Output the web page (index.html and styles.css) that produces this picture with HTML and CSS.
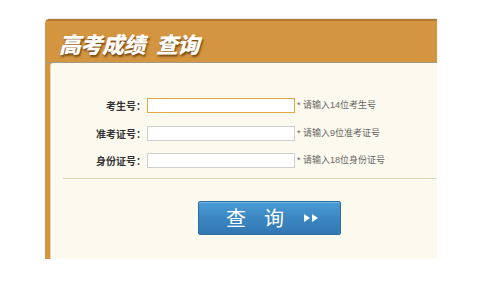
FILE: index.html
```html
<!DOCTYPE html>
<html lang="zh-CN">
<head>
    <meta charset="UTF-8">
    <meta name="viewport" content="width=device-width, initial-scale=1.0">
    <title>高考成绩查询</title>
    <link rel="stylesheet" href="styles.css">
</head>
<body>
    <div class="panel">
        <div class="panel-head">
            <h1><span>高考成绩</span><span class="title-gap">查询</span></h1>
        </div>
        <div class="panel-body">
            <form class="query-form" onsubmit="return false;">
                <label for="ksh">考生号：</label>
                <input type="text" id="ksh" class="focused">
                <span class="hint">* 请输入14位考生号</span>

                <label for="zkzh">准考证号：</label>
                <input type="text" id="zkzh">
                <span class="hint">* 请输入9位准考证号</span>

                <label for="sfzh">身份证号：</label>
                <input type="text" id="sfzh">
                <span class="hint">* 请输入18位身份证号</span>
            </form>
            <div class="divider"></div>
            <div class="actions">
                <button type="button" class="query-btn">
                    <span>查</span><span class="btn-gap">询</span>
                    <svg class="arrows" width="16" height="8" viewBox="0 0 16 8">
                        <polygon points="1,0 7,4 1,8" fill="#fff"/>
                        <polygon points="9,0 15,4 9,8" fill="#fff"/>
                    </svg>
                </button>
            </div>
        </div>
    </div>
</body>
</html>
```

FILE: styles.css
```css
body {
    margin: 0;
    background: #fff;
    font-family: "Liberation Sans", "Noto Sans CJK SC", sans-serif;
}
.panel {
    width: 392px;
    margin: 18px 0 0 45px;
    background-color: #d3953f;
    border-top: 1px solid #efe6dc;
    border-radius: 5px 0 0 0;
    overflow: hidden;
}
.panel-head {
    height: 41px;
    border-top: 2px solid #b37a35;
    border-bottom: 1px solid #a39a85;
    display: flex;
    align-items: center;
    padding-left: 14px;
}
.panel-head h1 {
    margin: 2px 0 0 0;
    font-size: 22px;
    font-weight: 900;
    font-style: italic;
    color: #fff;
    text-shadow: 1px 2px 2px rgba(80, 40, 0, 0.7);
    font-family: "Noto Sans CJK SC", sans-serif;
    letter-spacing: -0.5px;
}
.title-gap {
    margin-left: 11px;
}
.panel-body {
    margin-left: 5px;
    height: 196px;
    background-color: #fcf9ee;
    border-left: 1px solid #e6d9b8;
    border-radius: 3px 0 0 0;
    padding-top: 35px;
    box-sizing: border-box;
}
.query-form {
    display: grid;
    grid-template-columns: 95px 148px auto;
    row-gap: 12.5px;
    align-items: center;
}
.query-form label {
    text-align: right;
    font-size: 10px;
    font-weight: bold;
    color: #333;
    font-family: "Noto Sans CJK SC", sans-serif;
    line-height: 15px;
}
.query-form input {
    width: 148px;
    height: 15px;
    margin: 0 0 0 1px;
    padding: 0 3px;
    box-sizing: border-box;
    border: 1px solid #cfcfcf;
    background: #fff;
    outline: none;
}
.query-form input.focused {
    border-color: #e3a848;
}
.hint {
    margin-left: 3px;
    font-size: 9px;
    color: #666;
    line-height: 15px;
}
.divider {
    margin: 10px 0 0 12px;
    border-top: 1px solid #ddd5b3;
    border-bottom: 1px solid #fff;
}
.actions {
    padding: 21px 0 0 147px;
}
.query-btn {
    display: flex;
    align-items: center;
    width: 143px;
    height: 34px;
    padding: 0 0 0 27px;
    border: 1px solid #2f6ea5;
    border-radius: 2px;
    background: linear-gradient(#4a9cd6, #3a84c0 55%, #3379b3);
    box-shadow: inset 0 1px 0 rgba(255, 255, 255, 0.25);
    color: #fff;
    font-size: 20px;
    font-family: "Noto Sans CJK SC", sans-serif;
    line-height: 1;
    cursor: pointer;
}
.btn-gap {
    margin-left: 18px;
}
.arrows {
    margin-left: 19px;
}
```
